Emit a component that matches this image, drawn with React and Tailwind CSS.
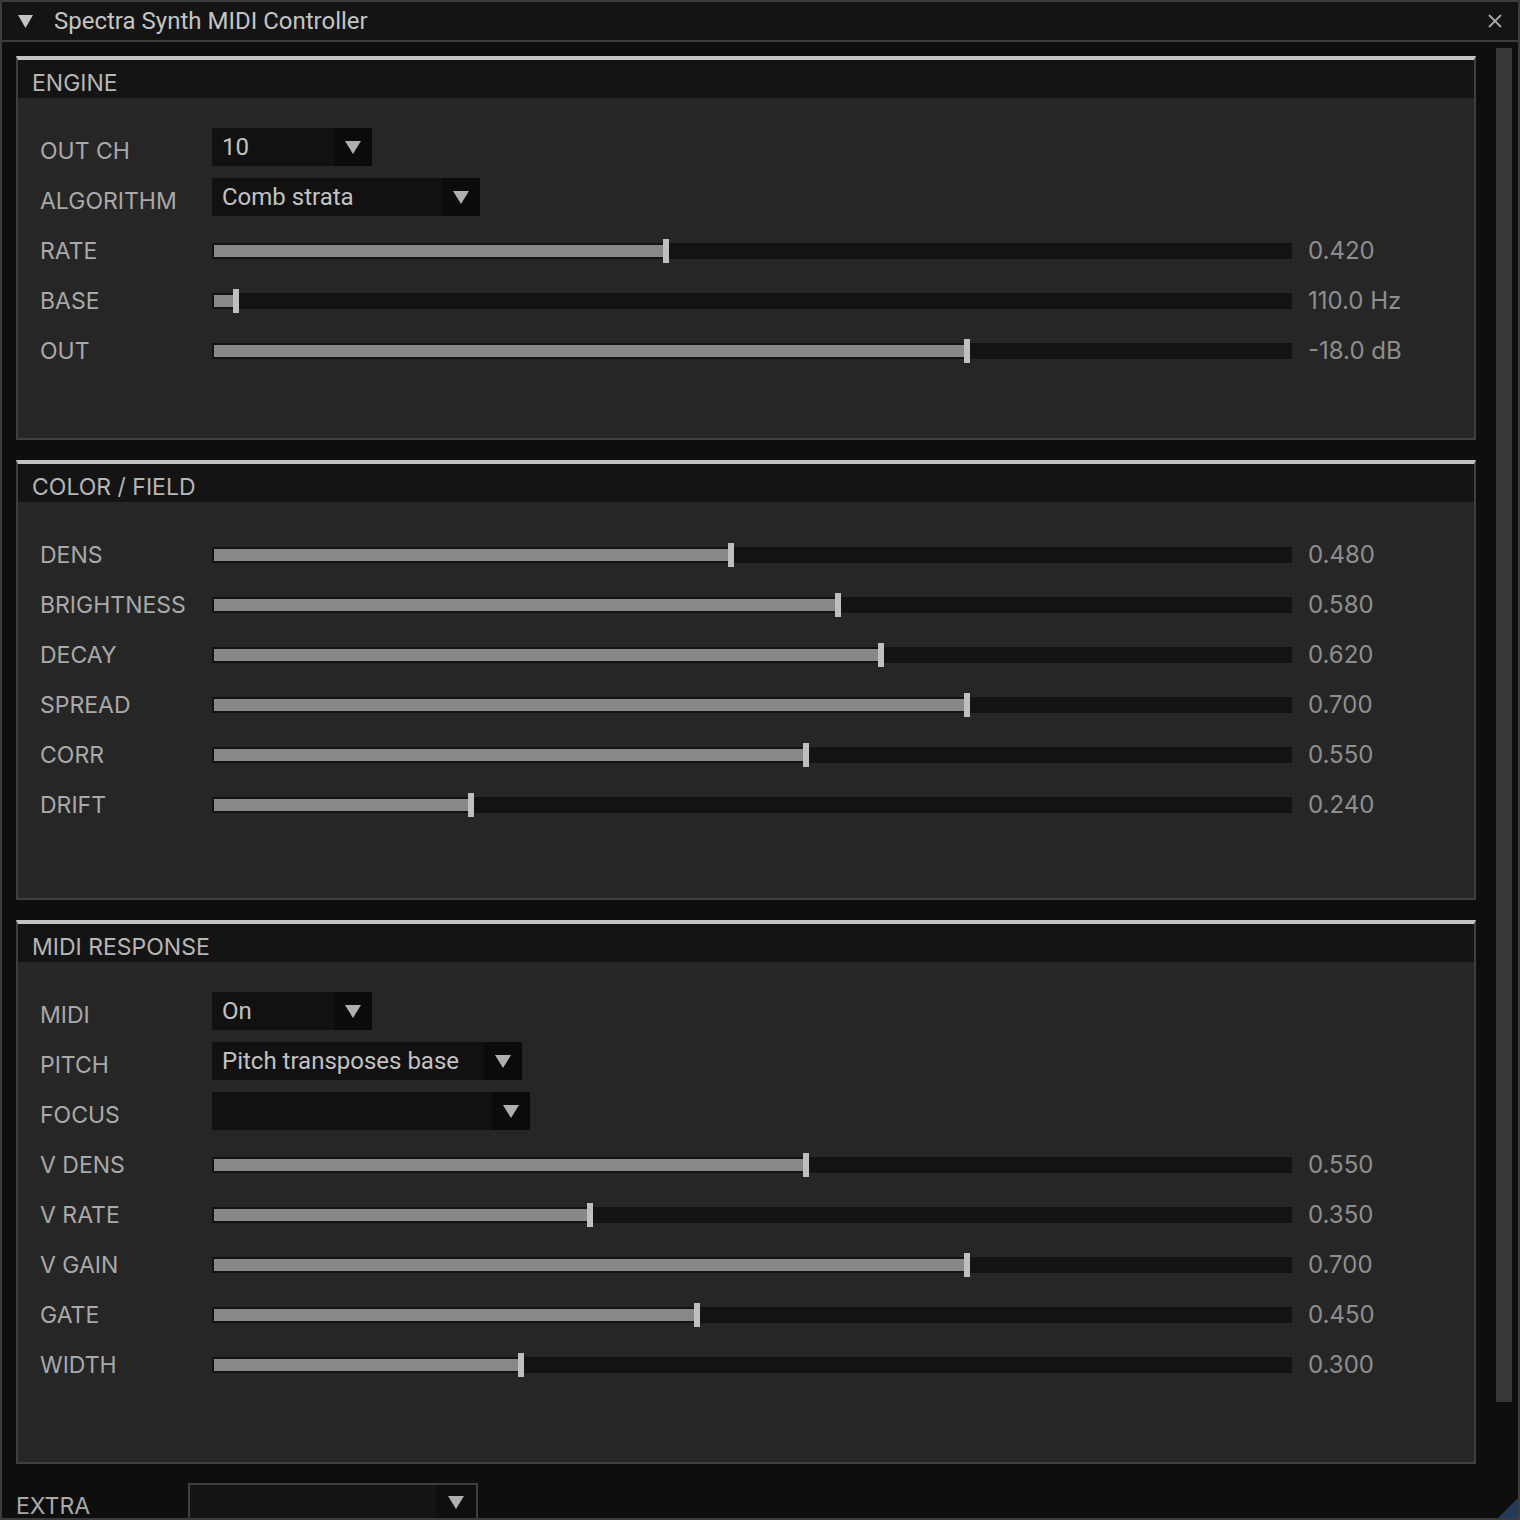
import React from "react";

const font = { fontFamily: "Inter, Roboto, 'Liberation Sans', sans-serif" };
const roboto = { fontFamily: "Roboto, 'Liberation Sans', sans-serif" };

const engine = [
  { type: "combo", label: "OUT CH", value: "10", w: "w-[160px]" },
  { type: "combo", label: "ALGORITHM", value: "Comb strata", w: "w-[268px]" },
  { type: "slider", label: "RATE", v: 0.42, text: "0.420" },
  { type: "slider", label: "BASE", v: 0.02, text: "110.0 Hz" },
  { type: "slider", label: "OUT", v: 0.7, text: "-18.0 dB" },
];

const color = [
  { type: "slider", label: "DENS", v: 0.48, text: "0.480" },
  { type: "slider", label: "BRIGHTNESS", v: 0.58, text: "0.580" },
  { type: "slider", label: "DECAY", v: 0.62, text: "0.620" },
  { type: "slider", label: "SPREAD", v: 0.7, text: "0.700" },
  { type: "slider", label: "CORR", v: 0.55, text: "0.550" },
  { type: "slider", label: "DRIFT", v: 0.238, text: "0.240" },
];

const midi = [
  { type: "combo", label: "MIDI", value: "On", w: "w-[160px]" },
  { type: "combo", label: "PITCH", value: "Pitch transposes base", w: "w-[310px]" },
  { type: "combo", label: "FOCUS", value: "", w: "w-[318px]" },
  { type: "slider", label: "V DENS", v: 0.55, text: "0.550" },
  { type: "slider", label: "V RATE", v: 0.349, text: "0.350" },
  { type: "slider", label: "V GAIN", v: 0.7, text: "0.700" },
  { type: "slider", label: "GATE", v: 0.449, text: "0.450" },
  { type: "slider", label: "WIDTH", v: 0.285, text: "0.300" },
];

function Arrow() {
  return (
    <svg width="16" height="13" viewBox="0 0 16 13">
      <polygon points="0,0 16,0 8,13" fill="#b0b0b0" />
    </svg>
  );
}

function Combo({ value, w }) {
  return (
    <div className={`${w} h-[38px] flex bg-[#111111] mb-[8px]`}>
      <div
        className="flex-1 flex items-center pl-[10px] text-[24px] text-[#c2c2c2] whitespace-nowrap"
        style={roboto}
      >
        {value}
      </div>
      <div className="w-[38px] flex items-center justify-center bg-[#0b0b0b]">
        <Arrow />
      </div>
    </div>
  );
}

function Slider({ v }) {
  const pos = v * 1074;
  return (
    <div className="w-[1080px] h-[24px] flex items-center relative">
      <div className="w-full h-[16px] bg-[#131313] relative">
        <div
          className="absolute left-[2px] top-[2px] bottom-[2px] bg-[#888888]"
          style={{ width: pos - 2 }}
        />
      </div>
      <div
        className="absolute top-0 w-[6px] h-[24px] bg-[#bfbfbf]"
        style={{ left: pos }}
      />
    </div>
  );
}

function Row({ r }) {
  return (
    <div className="h-[50px] flex items-center">
      <div className="w-[172px] text-[#a9a9a9]">{r.label}</div>
      {r.type === "combo" ? (
        <Combo value={r.value} w={r.w} />
      ) : (
        <>
          <Slider v={r.v} />
          <div className="pl-[16px] text-[24px] text-[#8e8e8e]">{r.text}</div>
        </>
      )}
    </div>
  );
}

function Section({ title, rows, h }) {
  return (
    <div className="border-2 border-t-4 border-[#3f3f3f] border-t-[#c2c2c2] mb-[20px]">
      <div className="h-[38px] bg-[#141414] flex items-center pl-[14px] pt-[8px] text-[#b6b6b6]">
        {title}
      </div>
      <div className={`${h} bg-[#262626] pt-[28px] pl-[22px]`}>
        {rows.map((r) => (
          <Row key={r.label} r={r} />
        ))}
      </div>
    </div>
  );
}

export default function App() {
  return (
    <div
      className="w-[1520px] h-[1520px] bg-[#0e0e0e] border-2 border-[#3c3c3c] flex flex-col overflow-hidden text-[23px] leading-none"
      style={font}
    >
      {/* title bar */}
      <div className="h-[40px] shrink-0 bg-[#141414] border-b-2 border-[#3c3c3c] flex items-center pl-[16px] pr-[16px]">
        <svg width="15" height="13" viewBox="0 0 15 13">
          <polygon points="0,0 15,0 7.5,13" fill="#c4c4c4" />
        </svg>
        <div className="ml-[21px] text-[24px] text-[#c4c4c4] flex-1" style={roboto}>
          Spectra Synth MIDI Controller
        </div>
        <svg width="14" height="14" viewBox="0 0 14 14">
          <path d="M1 1 L13 13 M13 1 L1 13" stroke="#a8a8a8" strokeWidth="1.8" />
        </svg>
      </div>

      {/* content */}
      <div className="flex-1 relative overflow-hidden pl-[14px] pr-[42px] pt-[14px]">
        <Section title="ENGINE" rows={engine} h="h-[340px]" />
        <Section title="COLOR / FIELD" rows={color} h="h-[396px]" />
        <Section title="MIDI RESPONSE" rows={midi} h="h-[500px]" />

        <div className="flex items-start -mt-[1px]">
          <div className="w-[172px] pt-[12px] text-[#a9a9a9]">EXTRA</div>
          <div className="w-[290px] h-[38px] flex border-2 border-[#3f3f3f] bg-[#141414]">
            <div className="flex-1" />
            <div className="w-[40px] flex items-center justify-center bg-[#0f0f0f]">
              <Arrow />
            </div>
          </div>
        </div>

        {/* scrollbar */}
        <div className="absolute right-[6px] top-[6px] w-[16px] h-[1354px] bg-[#373737]" />
        {/* resize grip */}
        <svg className="absolute right-0 bottom-0" width="20" height="20" viewBox="0 0 20 20">
          <polygon points="20,0 20,20 0,20" fill="#243a5a" />
        </svg>
      </div>
    </div>
  );
}
